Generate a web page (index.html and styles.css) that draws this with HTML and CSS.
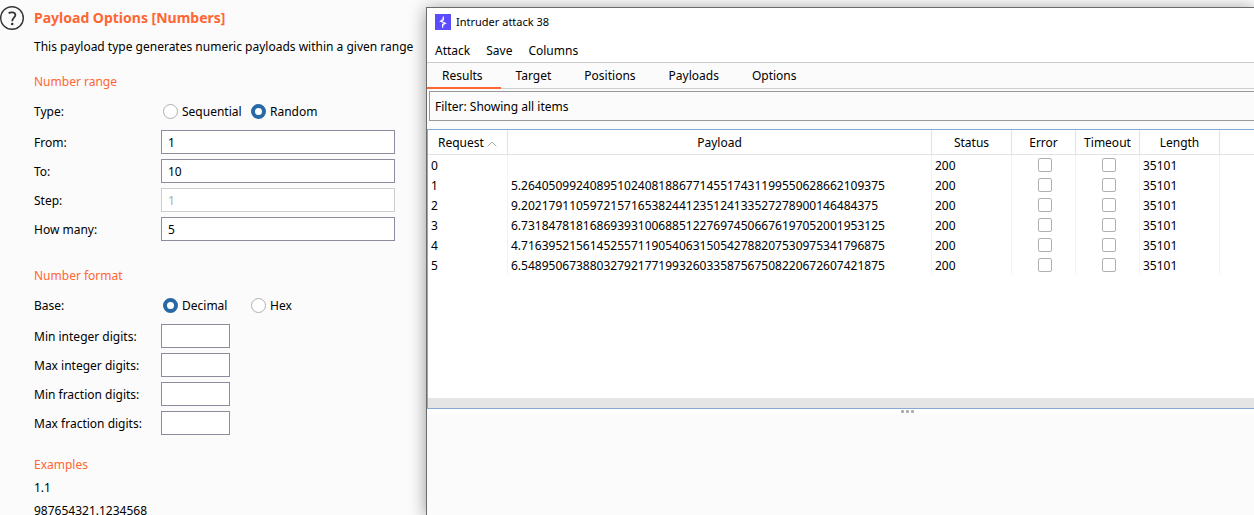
FILE: index.html
```
<!DOCTYPE html>
<html lang="en">
<head>
<meta charset="utf-8">
<title>Intruder payload options</title>
<link rel="stylesheet" href="styles.css">
</head>
<body>
<main class="options">
  <button class="help" aria-label="Help">
    <svg viewBox="0 0 26 26" width="26" height="26" fill="none" stroke="#333" aria-hidden="true">
      <circle cx="12" cy="13" r="11.3" stroke-width="1.4"/>
      <path d="M8.6 8.2C10.4 6.9 15.4 6.7 15.4 10.1C15.4 12.6 12.2 12.8 12.2 16.2" stroke-width="1.8"/>
      <circle cx="12.2" cy="19" r="1.3" fill="#333" stroke="none"/>
    </svg>
  </button>
  <div class="content">
    <h1 class="title">Payload Options [Numbers]</h1>
    <p class="intro">This payload type generates numeric payloads within a given range</p>

    <section class="group">
      <h2 class="heading">Number range</h2>
      <div class="row radios" role="radiogroup" aria-label="Type">
        <span class="label">Type:</span>
        <label class="choice"><input type="radio" name="type"><span class="choice-text">Sequential</span></label>
        <label class="choice"><input type="radio" name="type" checked><span class="choice-text">Random</span></label>
      </div>
      <div class="row"><label class="label" for="from">From:</label><input class="field" id="from" type="text" value="1"></div>
      <div class="row"><label class="label" for="to">To:</label><input class="field" id="to" type="text" value="10"></div>
      <div class="row"><label class="label" for="step">Step:</label><input class="field" id="step" type="text" value="1" disabled></div>
      <div class="row"><label class="label" for="many">How many:</label><input class="field" id="many" type="text" value="5"></div>
    </section>

    <section class="group">
      <h2 class="heading">Number format</h2>
      <div class="row radios" role="radiogroup" aria-label="Base">
        <span class="label">Base:</span>
        <label class="choice"><input type="radio" name="base" checked><span class="choice-text">Decimal</span></label>
        <label class="choice"><input type="radio" name="base"><span class="choice-text">Hex</span></label>
      </div>
      <div class="row"><label class="label" for="min-int">Min integer digits:</label><input class="field short" id="min-int" type="text"></div>
      <div class="row"><label class="label" for="max-int">Max integer digits:</label><input class="field short" id="max-int" type="text"></div>
      <div class="row"><label class="label" for="min-frac">Min fraction digits:</label><input class="field short" id="min-frac" type="text"></div>
      <div class="row"><label class="label" for="max-frac">Max fraction digits:</label><input class="field short" id="max-frac" type="text"></div>
    </section>

    <section class="examples">
      <h2 class="heading">Examples</h2>
      <p class="example">1.1</p>
      <p class="example">987654321.1234568</p>
    </section>
  </div>
</main>

<section class="window" aria-label="Intruder attack 38">
  <header class="titlebar">
    <svg viewBox="0 0 16 16" width="16" height="16" aria-hidden="true">
      <rect width="16" height="16" fill="#5b4dff"/>
      <path d="M8.4 2.4V6L5.6 7.2L10.4 9.2L7.6 10.4V13.8" fill="none" stroke="#fff" stroke-width="1.1"/>
      <path d="M8.2 2.4L5.2 7L8 7.6ZM7.8 13.6L10.8 9L8 8.6Z" fill="#fff" opacity=".45"/>
    </svg>
    <span>Intruder attack 38</span>
  </header>
  <nav class="menubar" aria-label="Menu">
    <button>Attack</button><button>Save</button><button>Columns</button>
  </nav>
  <div class="tabs" role="tablist">
    <button class="tab active" role="tab" aria-selected="true">Results</button>
    <button class="tab" role="tab">Target</button>
    <button class="tab" role="tab">Positions</button>
    <button class="tab" role="tab">Payloads</button>
    <button class="tab" role="tab">Options</button>
  </div>
  <button class="filter">Filter: Showing all items</button>
  <div class="results">
    <table class="grid">
      <colgroup><col class="c-request"><col class="c-payload"><col class="c-status"><col class="c-check"><col class="c-check"><col class="c-length"><col></colgroup>
      <thead>
        <tr>
          <th>Request <svg viewBox="0 0 10 6" width="10" height="6" fill="none" stroke="#aaa" aria-hidden="true"><path d="M.7 5.3L5 1L9.3 5.3"/></svg></th>
          <th>Payload</th><th>Status</th><th>Error</th><th>Timeout</th><th>Length</th><th></th>
        </tr>
      </thead>
      <tbody>
        <tr><td>0</td><td></td><td>200</td><td class="check"><input type="checkbox" aria-label="Error"></td><td class="check"><input type="checkbox" aria-label="Timeout"></td><td>35101</td><td></td></tr>
        <tr><td>1</td><td>5.26405099240895102408188677145517431199550628662109375</td><td>200</td><td class="check"><input type="checkbox" aria-label="Error"></td><td class="check"><input type="checkbox" aria-label="Timeout"></td><td>35101</td><td></td></tr>
        <tr><td>2</td><td>9.2021791105972157165382441235124133527278900146484375</td><td>200</td><td class="check"><input type="checkbox" aria-label="Error"></td><td class="check"><input type="checkbox" aria-label="Timeout"></td><td>35101</td><td></td></tr>
        <tr><td>3</td><td>6.73184781816869393100688512276974506676197052001953125</td><td>200</td><td class="check"><input type="checkbox" aria-label="Error"></td><td class="check"><input type="checkbox" aria-label="Timeout"></td><td>35101</td><td></td></tr>
        <tr><td>4</td><td>4.71639521561452557119054063150542788207530975341796875</td><td>200</td><td class="check"><input type="checkbox" aria-label="Error"></td><td class="check"><input type="checkbox" aria-label="Timeout"></td><td>35101</td><td></td></tr>
        <tr><td>5</td><td>6.54895067388032792177199326033587567508220672607421875</td><td>200</td><td class="check"><input type="checkbox" aria-label="Error"></td><td class="check"><input type="checkbox" aria-label="Timeout"></td><td>35101</td><td></td></tr>
      </tbody>
    </table>
    <div class="scroll-track"></div>
  </div>
  <div class="splitter"><i></i><i></i><i></i></div>
</section>
</body>
</html>
```
FILE: styles.css
```
* { box-sizing: border-box; }

body {
  margin: 0;
  height: 100vh;
  overflow: hidden;
  background: #fbfbfb;
  color: #000;
  font: 12px/20px "Noto Sans", "Open Sans", sans-serif;
}

h1, h2, p { margin: 0; }

button, input { font: inherit; color: inherit; }

button {
  padding: 0;
  border: 0;
  background: none;
}

/* Options panel */
.options {
  display: flex;
  gap: 8px;
  padding-top: 5px;
}

.help { width: 26px; height: 26px; }
.help svg { display: block; }

.title {
  margin-bottom: 7px;
  color: #ff6633;
  font-size: 14px;
  line-height: 25px;
}

.intro { margin-bottom: 15px; white-space: nowrap; }

.heading {
  margin-bottom: 2px;
  color: #ff6633;
  font-size: 12px;
  font-weight: 400;
}

.group {
  display: flex;
  flex-direction: column;
  gap: 5px;
  margin-bottom: 25px;
}

.group + .examples { margin-top: -5px; }

.row { display: flex; align-items: center; height: 24px; }
.radios { margin-bottom: 2px; }
.label { width: 127px; padding-top: 2px; }

.choice {
  display: flex;
  align-items: center;
  width: 88px;
  padding-left: 2px;
  gap: 4px;
}

.choice-text { padding-top: 2px; }

input[type="radio"] {
  appearance: none;
  flex: none;
  width: 15px;
  height: 15px;
  margin: 0;
  border: 1px solid #b0b0b0;
  border-radius: 50%;
  background: #fff;
}

input[type="radio"]:checked { border: 4px solid #2868a4; }

.field {
  width: 234px;
  height: 24px;
  padding: 0 6px;
  border: 1px solid #8e8b9e;
  background: #fff;
}

.field:disabled { border-color: #cdcdcd; color: #aaa; }
.short { width: 69px; }

.examples .heading { margin-bottom: 1px; }
.example { line-height: 23px; }

/* Attack window */
.window {
  position: absolute;
  inset: 7px 0 0 426px;
  display: flex;
  flex-direction: column;
  border: 1px solid #6b6b6b;
  border-width: 1px 0 0 1px;
  background: #fbfbfb;
  box-shadow: 0 2px 16px rgba(0, 0, 0, 0.4);
}

.titlebar {
  display: flex;
  align-items: center;
  gap: 5px;
  height: 28px;
  padding-left: 8px;
  background: #fff;
  font-size: 11px;
}

.menubar {
  display: flex;
  gap: 16px;
  height: 27px;
  padding: 4px 8px 0;
  border-bottom: 1px solid #cdcdcd;
  background: #fff;
}

.tabs {
  display: flex;
  height: 26px;
  border-bottom: 1px solid #cdd0d0;
}

.tab { height: 26px; padding: 0 18px 0 15px; }
.active { border-bottom: 2px solid #ff6633; padding-top: 2px; }

.filter {
  height: 30px;
  margin: 2px 0 8px 2px;
  padding: 2px 0 0 5px;
  border: 1px solid #999;
  border-right: 0;
  text-align: left;
}

.results {
  display: flex;
  flex-direction: column;
  justify-content: space-between;
  height: 280px;
  border: 1px solid #83a9d4;
  border-right: 0;
  background: #fff;
}

.grid {
  width: 100%;
  border-collapse: separate;
  border-spacing: 0;
  table-layout: fixed;
}

.c-request, .c-status, .c-length { width: 80px; }
.c-payload { width: 424px; }
.c-check { width: 64px; }

th, td {
  height: 20px;
  padding: 2px 3px 0;
  border-right: 1px solid #f3f3f3;
  line-height: 18px;
  white-space: nowrap;
}

th {
  height: 25px;
  border-right-color: #e2e2e2;
  border-bottom: 1px solid #e2e2e2;
  font-weight: 400;
}

th:last-child, td:last-child { border-right: 0; }
td { text-align: left; }
.check { padding: 0 0 0 3px; }

input[type="checkbox"] {
  appearance: none;
  display: block;
  width: 14px;
  height: 14px;
  margin: 0 auto;
  border: 1px solid #b0b0b0;
  border-radius: 2px;
  background: #fff;
}

.scroll-track { height: 10px; background: #e5e5e5; }

.splitter {
  display: flex;
  justify-content: center;
  align-items: center;
  gap: 2px;
  height: 5px;
  padding-left: 133px;
  background: #fff;
}

.splitter i { width: 3px; height: 3px; border-radius: 1px; background: #aaa; }
```
